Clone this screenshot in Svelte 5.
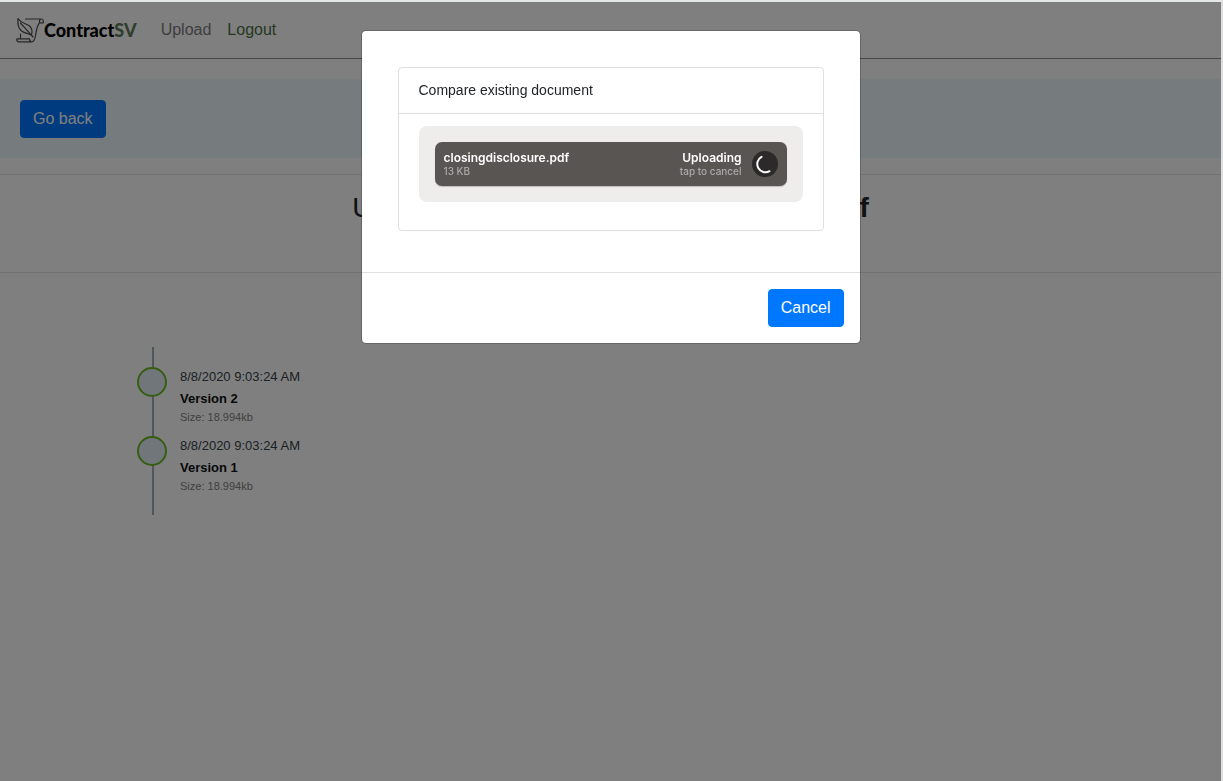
<script lang="ts">
    interface Version {
        name: string;
        date: string;
        size: string;
    }

    const versions: Version[] = [
        { name: 'Version 2', date: '8/8/2020 9:03:24 AM', size: '18.994kb' },
        { name: 'Version 1', date: '8/8/2020 9:03:24 AM', size: '18.994kb' }
    ];

    const file = { name: 'closingdisclosure.pdf', size: '13 KB' };

    let open = $state(true);

    function close() {
        open = false;
    }
</script>

<div class="page">
    <nav>
        <a class="brand" href="/">
            <svg width="28" height="26" viewBox="0 0 28 26" fill="none" stroke="#4c4c4c" stroke-width="1.2" stroke-linejoin="round" stroke-linecap="round">
                <path d="M9.500 2H25.500c1.600 0 2 1.800 1.800 3.800h-3.800c0-1.800-.2-3.800 2-3.800M23.500 5.800C20.500 9 20.500 14 19.500 18.500 19 22 17.500 24.800 15.500 24.800H3c-1.800 0-2.500-1.400-2.200-3h12.700c0 1.800.5 3 2 3" />
                <path d="M2 1.500C1.500 6 2 11 5.500 14c3 2.200 6.500 2.500 10 4 1.200-4 .5-7.200-2.500-9.500C9.500 6.500 4.500 5.500 2 1.500z" />
                <path d="M4.500 6C8 10 12 14 17 20M4.500 17v4.500" />
            </svg>
            <span>Contract<b>SV</b></span>
        </a>
        <a class="link" href="/upload">Upload</a>
        <a class="link green" href="/logout">Logout</a>
    </nav>

    <div class="banner">
        <button class="btn">Go back</button>
    </div>

    <header>
        <h1>Upload history for <b>closingdisclosure.pdf</b></h1>
    </header>

    <ul class="timeline">
        {#each versions as version}
            <li>
                <span class="dot"></span>
                <div>
                    <time>{version.date}</time>
                    <strong>{version.name}</strong>
                    <small>Size: {version.size}</small>
                </div>
            </li>
        {/each}
    </ul>
</div>

{#if open}
    <div class="backdrop">
        <div class="modal" role="dialog" aria-modal="true" aria-labelledby="compare-title">
            <div class="modal-body">
                <section class="card">
                    <h2 id="compare-title">Compare existing document</h2>
                    <div class="card-body">
                        <div class="pond">
                            <div class="item">
                                <div class="info">
                                    <span class="main">{file.name}</span>
                                    <span class="sub">{file.size}</span>
                                </div>
                                <div class="info status">
                                    <span class="main">Uploading</span>
                                    <span class="sub">tap to cancel</span>
                                </div>
                                <button class="spinner" aria-label="Cancel upload">
                                    <svg width="26" height="26" viewBox="0 0 26 26" fill="none" stroke="#fff" stroke-width="2" stroke-linecap="round">
                                        <path d="M9.500 5.800A8.200 8.200 0 0 0 17.500 20.200" />
                                    </svg>
                                </button>
                            </div>
                        </div>
                    </div>
                </section>
            </div>
            <footer>
                <button class="btn" onclick={close}>Cancel</button>
            </footer>
        </div>
    </div>
{/if}

<style>
    :global(body) {
        margin: 0;
        background-color: #fff;
        color: #212529;
        font-family: 'Liberation Sans', Arial, sans-serif;
        font-size: 16px;
        line-height: 24px;
    }
    .page {
        box-sizing: border-box;
        min-height: 100vh;
        border-top: 2px solid #e4e8e9;
        border-right: 2px solid #dedede;
    }
    nav {
        display: flex;
        align-items: center;
        height: 56px;
        padding: 0 16px;
        border-bottom: 1px solid #909090;
    }
    .brand {
        display: flex;
        align-items: center;
        margin-right: 24px;
        color: #000;
        font-family: Lato, sans-serif;
        font-size: 18px;
        font-weight: 900;
        text-decoration: none;
    }
    .brand b {
        color: #5f7d5a;
        font-weight: 900;
    }
    .link {
        margin-right: 16px;
        color: #7c7c7c;
        text-decoration: none;
    }
    .green {
        color: #4e7044;
    }
    .banner {
        margin: 20px 0 16px;
        padding: 21px 20px 20px;
        background-color: #ecf8fd;
    }
    .btn {
        display: block;
        padding: 6px 12px;
        border: 1px solid #0077ff;
        border-radius: 4px;
        background-color: #0077ff;
        color: #fff;
        font: inherit;
        cursor: pointer;
    }
    header {
        height: 97px;
        border-top: 1px solid #e5e5e5;
        border-bottom: 1px solid #e5e5e5;
        text-align: center;
    }
    h1 {
        margin: 16px 0 0;
        font-size: 28px;
        font-weight: 400;
        line-height: 34px;
    }
    .timeline {
        width: max-content;
        margin: 74px 0 0 152px;
        padding: 20px 0;
        border-left: 2px solid #9db1b8;
        list-style: none;
    }
    .timeline li {
        display: flex;
        gap: 13px;
        height: 69px;
        margin-left: -17px;
    }
    .timeline li:last-child {
        height: 59px;
    }
    .dot {
        box-sizing: border-box;
        width: 30px;
        height: 30px;
        border: 2px solid #6cbb24;
        border-radius: 50%;
        background-color: #e0edf2;
    }
    time,
    strong,
    small {
        display: block;
    }
    time {
        color: #37424a;
        font-size: 13px;
        line-height: 20px;
    }
    strong {
        color: #111;
        font-size: 13px;
        line-height: 24px;
    }
    small {
        color: #808080;
        font-size: 11px;
        line-height: 12px;
    }
    .backdrop {
        position: fixed;
        inset: 2px 2px 0 0;
        background-color: rgba(0, 0, 0, 0.5);
    }
    .modal {
        box-sizing: border-box;
        max-width: 500px;
        margin: 28px auto;
        border: 1px solid rgba(0, 0, 0, 0.2);
        border-radius: 5px;
        background-color: #fff;
        background-clip: padding-box;
    }
    .modal-body {
        padding: 36px 36px 41px;
    }
    .card {
        border: 1px solid #dfdfdf;
        border-radius: 4px;
    }
    h2 {
        margin: 0;
        padding: 12px 20px;
        border-bottom: 1px solid #dfdfdf;
        font-size: 14px;
        font-weight: 400;
        line-height: 21px;
    }
    .card-body {
        padding: 12px 20px 28px;
    }
    .pond {
        padding: 16px;
        border-radius: 8px;
        background-color: #eeedec;
    }
    .item {
        display: flex;
        align-items: center;
        height: 44px;
        padding: 0 9px;
        border-radius: 7px;
        background-color: #595553;
        box-shadow: 0 1px 1px rgba(0, 0, 0, 0.2);
        color: #fff;
        font-family: Inter, sans-serif;
    }
    .info {
        display: flex;
        flex: 1;
        flex-direction: column;
        padding-bottom: 2px;
    }
    .status {
        align-items: flex-end;
        margin-right: 10px;
    }
    .main {
        font-size: 12px;
        font-weight: 600;
        line-height: 15px;
    }
    .sub {
        color: #acaaa9;
        font-size: 10px;
        font-weight: 500;
        line-height: 12px;
    }
    .spinner {
        width: 26px;
        height: 26px;
        padding: 0;
        border: none;
        border-radius: 50%;
        background-color: #2b2929;
        cursor: pointer;
    }
    .spinner svg {
        display: block;
    }
    footer {
        display: flex;
        justify-content: flex-end;
        padding: 16px;
        border-top: 1px solid #dee2e6;
    }
</style>
